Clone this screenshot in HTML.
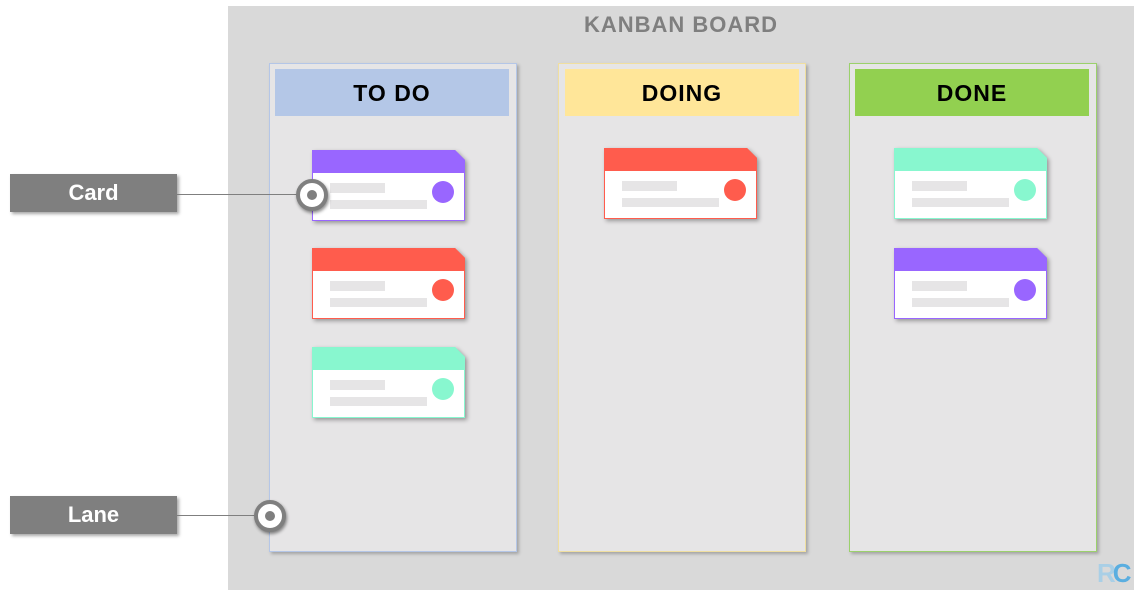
<!DOCTYPE html><html><head><style>
body{margin:0;width:1142px;height:596px;background:#fff;position:relative;overflow:hidden;font-family:"Liberation Sans","DejaVu Sans",sans-serif}
.a{position:absolute}
.board{left:228px;top:6px;width:906px;height:584px;background:#d9d9d9}
.title{left:228px;width:906px;top:12px;text-align:center;font-weight:bold;font-size:22px;color:#7f7f7f;letter-spacing:1px}
.lane{background:#e6e5e6;box-shadow:2px 2px 3px rgba(0,0,0,.25);box-sizing:border-box;top:63px;height:489px;width:248px}
.hd{top:69px;height:47px;width:234px;text-align:center;line-height:48px;font-weight:bold;font-size:23px;color:#000;letter-spacing:1px}
.card{width:153px;height:71px;filter:drop-shadow(2px 2px 2px rgba(0,0,0,.35))}
.in{position:absolute;left:0;top:0;width:153px;height:71px;clip-path:polygon(0 0,143px 0,153px 10px,153px 71px,0 71px)}
.in .h{position:absolute;left:0;top:0;width:153px;height:23px}
.in .w{position:absolute;left:1px;top:23px;width:151px;height:47px;background:#fff}
.in .b1{position:absolute;left:18px;top:33px;width:55px;height:10px;background:#e6e5e6}
.in .b2{position:absolute;left:18px;top:50px;width:97px;height:9px;background:#e6e5e6}
.in .c{position:absolute;left:120px;top:31px;width:22px;height:22px;border-radius:50%}
.lbl{left:10px;width:167px;height:38px;background:#7f7f7f;color:#fff;font-weight:bold;font-size:22px;text-align:center;line-height:38px;box-shadow:2px 2px 3px rgba(0,0,0,.35)}
.ln{height:1px;background:#7f7f7f}
.mk{width:24px;height:24px;border-radius:50%;background:#fff;border:4px solid #7f7f7f;box-shadow:1px 2px 3px rgba(0,0,0,.45)}
.mk::after{content:"";position:absolute;left:7px;top:7px;width:10px;height:10px;border-radius:50%;background:#7f7f7f}
</style></head><body>
<div class="a board"></div>
<div class="a title">KANBAN BOARD</div>
<div class="a lane" style="left:269px;border:1px solid #b4c6e7"></div>
<div class="a lane" style="left:558px;border:1px solid #f0dfa0"></div>
<div class="a lane" style="left:849px;border:1px solid #9bd16c"></div>
<div class="a hd" style="left:275px;background:#b4c7e7">TO DO</div>
<div class="a hd" style="left:565px;background:#ffe699">DOING</div>
<div class="a hd" style="left:855px;background:#92d050">DONE</div>

<div class="a card" style="left:312px;top:150px"><div class="in" style="background:#9966ff"><div class="h" style="background:#9966ff"></div><div class="w"></div><div class="b1"></div><div class="b2"></div><div class="c" style="background:#9966ff"></div></div></div>
<div class="a card" style="left:312px;top:248px"><div class="in" style="background:#ff5c4d"><div class="h" style="background:#ff5c4d"></div><div class="w"></div><div class="b1"></div><div class="b2"></div><div class="c" style="background:#ff5c4d"></div></div></div>
<div class="a card" style="left:312px;top:347px"><div class="in" style="background:#88f7cf"><div class="h" style="background:#88f7cf"></div><div class="w"></div><div class="b1"></div><div class="b2"></div><div class="c" style="background:#88f7cf"></div></div></div>
<div class="a card" style="left:604px;top:148px"><div class="in" style="background:#ff5c4d"><div class="h" style="background:#ff5c4d"></div><div class="w"></div><div class="b1"></div><div class="b2"></div><div class="c" style="background:#ff5c4d"></div></div></div>
<div class="a card" style="left:894px;top:148px"><div class="in" style="background:#88f7cf"><div class="h" style="background:#88f7cf"></div><div class="w"></div><div class="b1"></div><div class="b2"></div><div class="c" style="background:#88f7cf"></div></div></div>
<div class="a card" style="left:894px;top:248px"><div class="in" style="background:#9966ff"><div class="h" style="background:#9966ff"></div><div class="w"></div><div class="b1"></div><div class="b2"></div><div class="c" style="background:#9966ff"></div></div></div>

<div class="a lbl" style="top:174px">Card</div>
<div class="a ln" style="left:177px;top:194px;width:120px"></div>
<div class="a mk" style="left:296px;top:179px"></div>
<div class="a lbl" style="top:496px">Lane</div>
<div class="a ln" style="left:177px;top:515px;width:80px"></div>
<div class="a mk" style="left:254px;top:500px"></div>
<div class="a" style="left:1097px;top:558px;font-weight:bold;font-size:26px;color:#5aaee0;letter-spacing:-3px"><span style="color:#a9cfe6">R</span>C</div>
</body></html>
